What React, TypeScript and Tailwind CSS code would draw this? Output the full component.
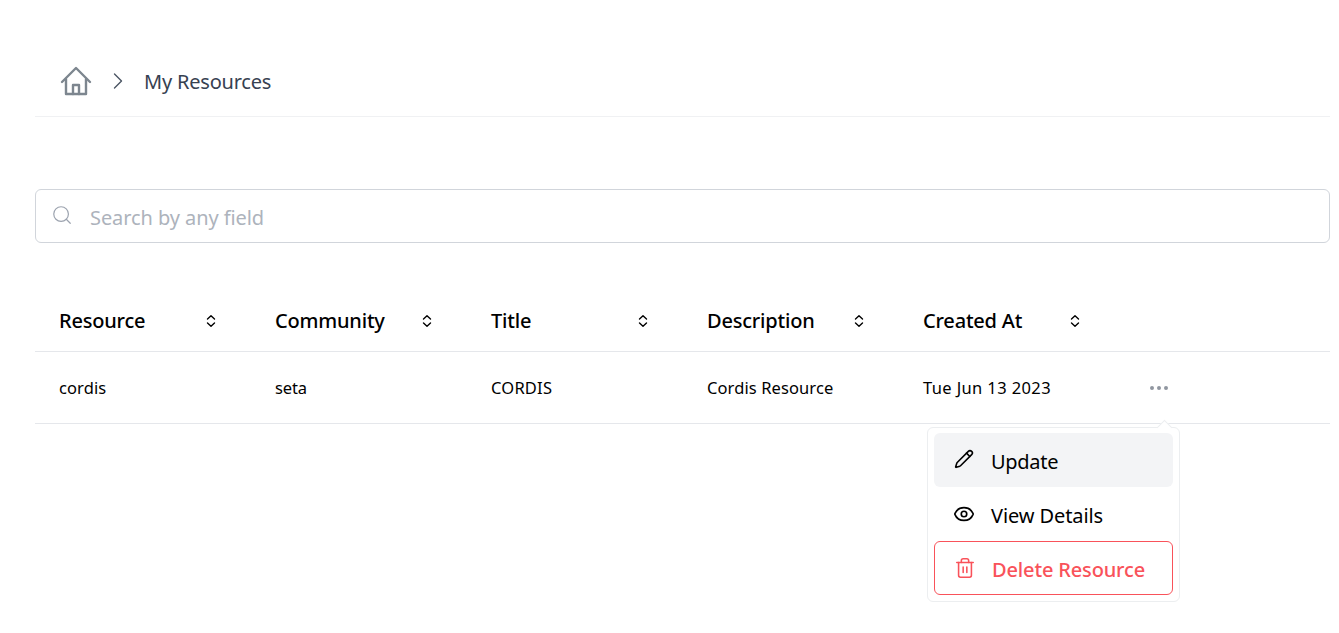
import { Eye, Pencil, Search, Trash2, ChevronRight, Ellipsis } from 'lucide-react';

const columns = ['Resource', 'Community', 'Title', 'Description', 'Created At'];
const row = [
  { text: 'cordis', className: 'tracking-[0.1px]' },
  { text: 'seta', className: 'tracking-[-0.1px]' },
  { text: 'CORDIS', className: 'tracking-[0.2px]' },
  { text: 'Cordis Resource', className: 'tracking-[0.1px]' },
  { text: 'Tue Jun 13 2023', className: 'tracking-[0.38px]' },
];

function SortIcon() {
  return (
    <svg className="w-4 h-4 text-black -ml-[1px]" viewBox="0 0 16 16" fill="none" stroke="currentColor" strokeWidth={1.4} strokeLinecap="round" strokeLinejoin="round">
      <path d="M4.5 6L8 2.8 11.5 6" />
      <path d="M4.5 10L8 13.2 11.5 10" />
    </svg>
  );
}

function HomeIcon() {
  return (
    <svg className="w-8 h-8 text-[#7d868f]" viewBox="0 0 32 32" fill="none" stroke="currentColor" strokeWidth={2.4} strokeLinejoin="round" strokeLinecap="round">
      <path d="M2 17L16 3l14 14" />
      <path d="M6 14v15h20V14" />
      <path d="M13 29v-9h6v9" />
    </svg>
  );
}

export default function App() {
  return (
    <div className="min-h-[633px] bg-white pl-[35px] pr-[9px] font-['Noto_Sans',sans-serif] relative overflow-hidden">
      <div className="h-[117px] pt-[49px] border-b border-[#f0f1f3]">
        <div className="flex items-center h-[66px] pb-[2px] pl-[25px]">
          <HomeIcon />
          <ChevronRight className="w-7 h-7 ml-[12px] text-[#4b5563]" strokeWidth={1.2} />
          <span className="ml-[12px] pt-[2px] text-[20px] text-[#374151] tracking-[-0.2px]">My Resources</span>
        </div>
      </div>

      <div className="mt-[72px] h-[54px] flex items-center border border-[#d1d5db] rounded-md pl-[15px]">
        <Search className="w-[22px] h-[22px] text-[#9ca3af] -mt-[3px]" strokeWidth={1.3} />
        <span className="ml-[17px] pt-[3px] text-[20px] text-[#adb3bc] tracking-[-0.08px]">Search by any field</span>
      </div>

      <table className="mt-[43px] w-full table-fixed border-collapse">
        <thead>
          <tr className="h-[65px] border-b border-[#e5e7eb]">
            {columns.map((col) => (
              <th key={col} className="w-[216px] pl-6 pr-0 pt-[5px] text-left font-medium text-[20px] text-black">
                <div className="flex items-center justify-between pr-[32px] tracking-[-0.2px]">
                  {col}
                  <SortIcon />
                </div>
              </th>
            ))}
            <th />
          </tr>
        </thead>
        <tbody>
          <tr className="h-[72px] border-b border-[#e5e7eb]">
            {row.map((cell) => (
              <td key={cell.text} className={`pl-6 pt-[2px] text-[16.5px] text-black ${cell.className}`}>{cell.text}</td>
            ))}
            <td className="pl-[32px] pt-[2px]">
              <Ellipsis className="w-6 h-6 text-[#9096a0]" strokeWidth={2} />
            </td>
          </tr>
        </tbody>
      </table>

      <div className="absolute left-[927px] top-[427px] w-[253px] h-[175px] bg-white border border-[#eceef0] rounded-md p-[5px_6px] flex flex-col">
        <div className="absolute -top-[6px] left-[231px] w-[11px] h-[11px] rotate-45 bg-white border-l border-t border-[#eceef0]" />
        <div className="relative h-[54px] bg-[#f3f4f6] rounded-md flex items-center pl-[20px] text-[20px] text-black tracking-[-0.3px]">
          <Pencil className="w-5 h-5 mr-[17px] -mt-[2px]" strokeWidth={1.9} />
          <span className="pt-[4px]">Update</span>
        </div>
        <div className="h-[54px] flex items-center pl-[19px] text-[20px] text-black tracking-[-0.1px]">
          <Eye className="w-[22px] h-[22px] mr-[16px] -mt-[1px]" strokeWidth={1.8} />
          <span className="pt-[4px]">View Details</span>
        </div>
        <div className="h-[54px] flex items-center pl-[19px] text-[20px] font-medium text-[#f9525a] tracking-[-0.15px] border border-[#f9525a] rounded-md">
          <Trash2 className="w-[22px] h-[22px] mr-[16px] -mt-[1px]" strokeWidth={1.7} />
          <span className="pt-[4px]">Delete Resource</span>
        </div>
      </div>
    </div>
  );
}
